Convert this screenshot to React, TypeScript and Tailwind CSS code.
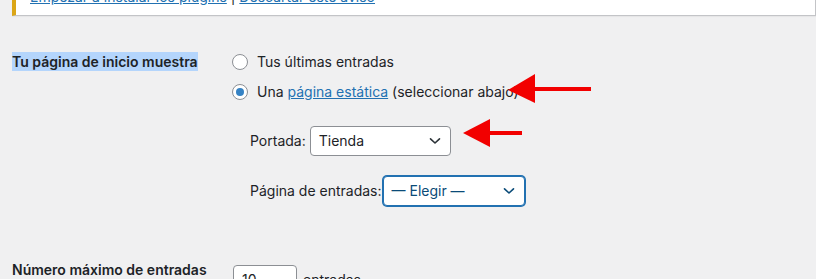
import React from "react";

const Chevron = ({ color = "#2c3338" }: { color?: string }) => (
  <svg width="12" height="8" viewBox="0 0 12 8" className="shrink-0">
    <path d="M1.5 1.8 L6 6 L10.5 1.8" fill="none" stroke={color} strokeWidth="1.6" strokeLinecap="round" strokeLinejoin="round" />
  </svg>
);

const Radio = ({ checked }: { checked?: boolean }) => (
  <span className="w-[16px] h-[16px] rounded-full border border-[#8c8f94] bg-white flex items-center justify-center shrink-0">
    {checked && <span className="w-[8px] h-[8px] rounded-full bg-[#3582c4]" />}
  </span>
);

export default function App() {
  return (
    <div className="relative w-[816px] h-[279px] overflow-hidden bg-[#f0f0f1] text-[14px] leading-[20px] text-[#1d2327] font-['Inter','Liberation_Sans',sans-serif]">
      {/* notice */}
      <div className="ml-[12px] -mt-[20px] h-[36px] border border-[#c3c4c7] border-l-4 border-l-[#dba617] bg-white shadow-[0_1px_1px_rgba(0,0,0,0.04)] pl-[14px] pt-[6px]">
        <p className="leading-[20px]">
          <a className="text-[#2271b1] underline">Empezar a instalar los plugins</a>
          <span className="text-[#1d2327]"> | </span>
          <a className="text-[#2271b1] underline">Descartar este aviso</a>
        </p>
      </div>

      {/* row 1 */}
      <div className="flex pl-[12px] mt-[36px]">
        <div className="w-[220px] shrink-0 font-semibold">
          <span className="bg-[#b4d5fc] py-[1px]">Tu página de inicio muestra</span>
        </div>
        <div className="flex flex-col">
          <div className="flex flex-col gap-[10px]">
            <label className="flex items-center gap-[9px]">
              <Radio />
              <span>Tus últimas entradas</span>
            </label>
            <label className="flex items-center gap-[9px]">
              <Radio checked />
              <span>
                Una <a className="text-[#2271b1] underline">página estática</a> (seleccionar abajo)
              </span>
            </label>
          </div>
          <div className="flex flex-col gap-[20px] pl-[18px] mt-[24px]">
            <div className="flex items-center gap-[4px]">
              <span>Portada:</span>
              <div className="w-[141px] h-[30px] rounded-[4px] border border-[#8c8f94] bg-white flex items-center justify-between pl-[8px] pr-[9px]">
                <span>Tienda</span>
                <Chevron />
              </div>
            </div>
            <div className="flex items-center gap-[1px]">
              <span>Página de entradas:</span>
              <div className="w-[142px] h-[30px] rounded-[4px] border border-[#2271b1] shadow-[0_0_0_1px_#2271b1] bg-white flex items-center justify-between pl-[8px] pr-[9px] text-[#0a4b78]">
                <span>— Elegir —</span>
                <Chevron color="#0a4b78" />
              </div>
            </div>
          </div>
        </div>
      </div>

      {/* row 2 */}
      <div className="flex pl-[12px] mt-[54px]">
        <div className="w-[221px] shrink-0 font-semibold">Número máximo de entradas</div>
        <div className="flex items-start gap-[6px] pt-[5px]">
          <div className="w-[64px] h-[30px] rounded-[4px] border border-[#8c8f94] bg-white px-[8px] flex items-center">10</div>
          <span className="pt-[5px]">entradas</span>
        </div>
      </div>

      {/* arrows */}
      <svg className="absolute left-0 top-0 pointer-events-none" width="816" height="279">
        <polygon points="508,90 535,74 535,103" fill="#f20000" />
        <rect x="533" y="87" width="58" height="4" fill="#f20000" />
        <polygon points="463,133 490,119 490,147" fill="#f20000" />
        <rect x="488" y="131" width="34" height="4" fill="#f20000" />
      </svg>
    </div>
  );
}
